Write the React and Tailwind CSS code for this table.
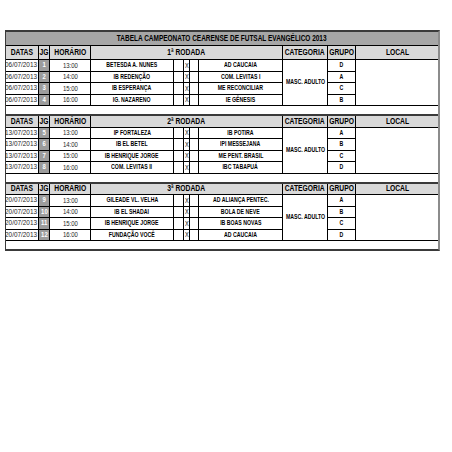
import React from 'react';
import clsx from 'clsx';

const rodadas = [
  {
    nome: '1ª RODADA',
    data: '06/07/2013',
    jogos: [
      ['1', '13:00', 'BETESDA A. NUNES', 'AD CAUCAIA', 'D'],
      ['2', '14:00', 'IB REDENÇÃO', 'COM. LEVITAS I', 'A'],
      ['3', '15:00', 'IB ESPERANÇA', 'ME RECONCILIAR', 'C'],
      ['4', '16:00', 'IG. NAZARENO', 'IE GÊNESIS', 'B'],
    ],
  },
  {
    nome: '2ª RODADA',
    data: '13/07/2013',
    jogos: [
      ['5', '13:00', 'IP FORTALEZA', 'IB POTIRA', 'A'],
      ['6', '14:00', 'IB EL BETEL', 'IPI MESSEJANA', 'B'],
      ['7', '15:00', 'IB HENRIQUE JORGE', 'ME PENT. BRASIL', 'C'],
      ['8', '16:00', 'COM. LEVITAS II', 'IBC TABAPUÁ', 'D'],
    ],
  },
  {
    nome: '3ª RODADA',
    data: '20/07/2013',
    jogos: [
      ['9', '13:00', 'GILEADE VL. VELHA', 'AD ALIANÇA PENTEC.', 'A'],
      ['10', '14:00', 'IB EL SHADAI', 'BOLA DE NEVE', 'B'],
      ['11', '15:00', 'IB HENRIQUE JORGE', 'IB BOAS NOVAS', 'C'],
      ['12', '16:00', 'FUNDAÇÃO VOCÊ', 'AD CAUCAIA', 'D'],
    ],
  },
];

const cols = 'grid grid-cols-[33px_11px_41px_83px_10px_6px_9px_84px_45px_28px_82px]';

// texto "condensado" (Calibri da planilha) — Liberation Sans estreitado
const T = ({ children, className = 'scale-x-[0.8] origin-center' }) => (
  <span className={clsx('inline-block shrink-0', className)}>{children}</span>
);

const H = ({ children }) => <T className="scale-x-[0.75] origin-center">{children}</T>;

const Cell = ({ children, className, last }) => (
  <div
    className={clsx(
      'flex items-center justify-center whitespace-nowrap leading-none border-b border-black',
      !last && 'border-r',
      className
    )}
  >
    {children}
  </div>
);

const Rodada = ({ r, first }) => (
  <div className={clsx(!first && 'border-t-2 border-t-[#3a3a3a]')}>
    {/* cabeçalho */}
    <div className={clsx(cols, first ? 'h-[14px]' : 'h-[11.5px]', 'bg-[#d9d9d9] text-[9px] font-bold')}>
      <Cell><H>DATAS</H></Cell>
      <Cell><H>JG</H></Cell>
      <Cell><H>HORÁRIO</H></Cell>
      <Cell className="col-span-5"><H>{r.nome}</H></Cell>
      <Cell><H>CATEGORIA</H></Cell>
      <Cell><H>GRUPO</H></Cell>
      <Cell last><H>LOCAL</H></Cell>
    </div>

    {/* jogos */}
    <div className={clsx(cols, 'grid-rows-[11.5px_11.5px_11.5px_11.5px]')}>
      {r.jogos.map((j, i) => (
        <React.Fragment key={j[0]}>
          <Cell className="justify-end pr-px text-[8px] text-[#262626]">
            <T className="scale-x-[0.8] origin-right">{r.data}</T>
          </Cell>
          <Cell className="bg-[#9c9c9c] text-[8px] font-bold text-white">
            <span className="inline-block shrink-0 scale-x-[0.75]">{j[0]}</span>
          </Cell>
          <Cell className="text-[7.5px] text-[#262626]"><T>{j[1]}</T></Cell>
          <Cell className="text-[6.5px] font-bold"><T>{j[2]}</T></Cell>
          <Cell />
          <Cell className="text-[7px] justify-start pl-px"><T className="scale-x-[0.8] origin-left">X</T></Cell>
          <Cell />
          <Cell className="text-[6.5px] font-bold"><T>{j[3]}</T></Cell>
          {i === 0 && <Cell className="row-span-4 text-[6.5px] font-bold"><T>MASC. ADULTO</T></Cell>}
          <Cell className="text-[6.5px] font-bold"><T>{j[4]}</T></Cell>
          {i === 0 && <Cell last className="row-span-4" />}
        </React.Fragment>
      ))}
    </div>

    {/* linha em branco */}
    <div className="h-[8px] bg-white" />
  </div>
);

export default function App() {
  return (
    <div className="w-[452px] h-[452px] bg-white pt-[30px] text-black [font-family:'Liberation_Sans',Arial,sans-serif]">
      <div className="ml-[5px] w-[435px] border-t-2 border-t-[#3a3a3a] border-l border-l-[#3a3a3a] border-r-2 border-r-[#8c8c8c] border-b-2 border-b-[#3a3a3a]">
        <div className="h-[14px] bg-[#a6a6a6] border-b border-black flex items-center justify-center text-[9px] font-bold leading-none whitespace-nowrap">
          <T className="scale-x-[0.72] origin-center">TABELA CAMPEONATO CEARENSE DE FUTSAL EVANGÉLICO 2013</T>
        </div>
        {rodadas.map((r, i) => (
          <Rodada key={r.nome} r={r} first={i === 0} />
        ))}
      </div>
    </div>
  );
}
